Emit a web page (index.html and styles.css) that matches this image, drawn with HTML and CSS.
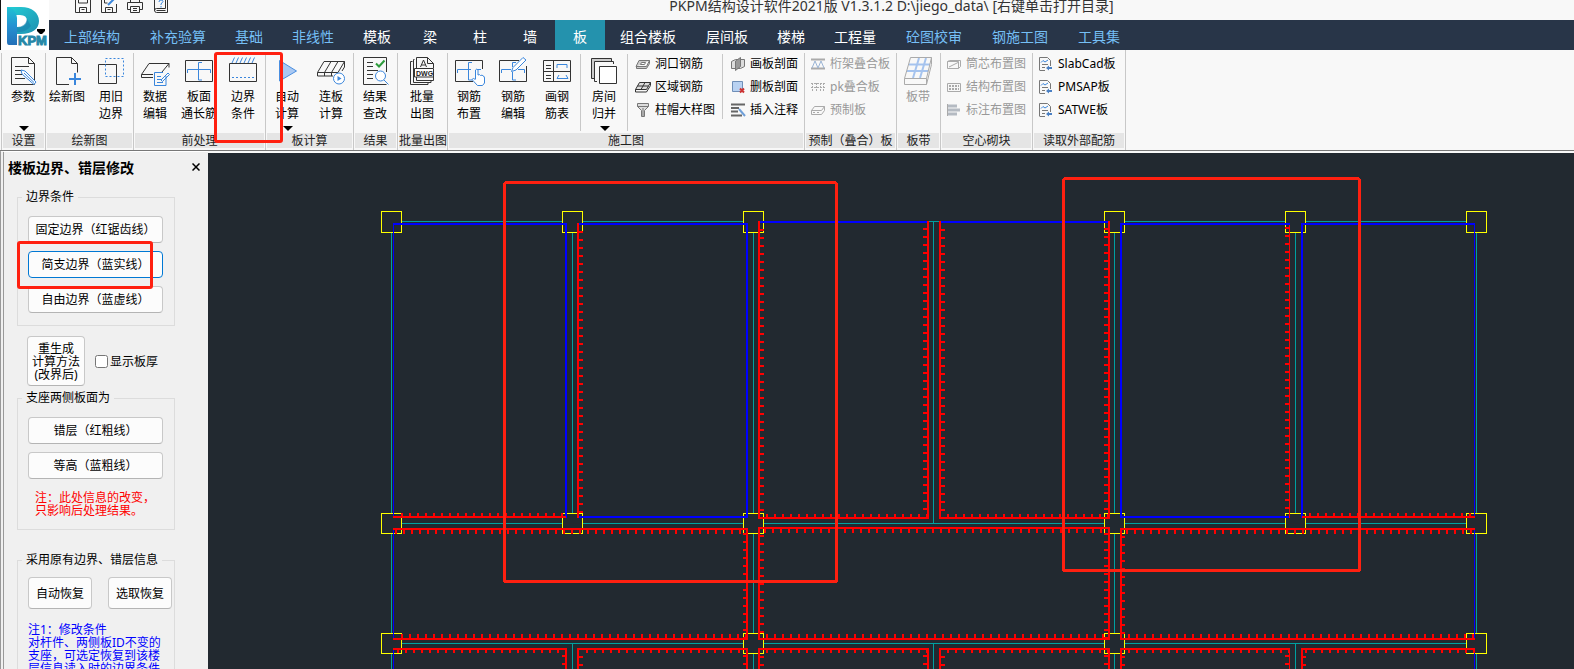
FILE: index.html
```html
<!DOCTYPE html>
<html lang="zh-CN">
<head>
<meta charset="utf-8">
<title>PKPM结构设计软件2021版</title>
<link rel="stylesheet" href="styles.css">
</head>
<body>
<header class="top">
  <button class="logo" aria-label="PKPM">
    <svg width="48" height="48" viewBox="0 0 48 48">
      <defs>
        <linearGradient id="stem" x1="0" y1="0" x2="0" y2="1"><stop offset="0" stop-color="#1fc3d3"/><stop offset=".5" stop-color="#2491d2"/><stop offset="1" stop-color="#2470b8"/></linearGradient>
        <linearGradient id="bowl" x1="0" y1="0" x2="1" y2="1"><stop offset="0" stop-color="#22cfd6"/><stop offset="1" stop-color="#1f8fb0"/></linearGradient>
      </defs>
      <path fill="url(#bowl)" d="M6 5H20C31 5 38 11 38 19S31 32 20 32H16V25Q24 26 26 19Q26 13 19 13H15z"/>
      <path fill="url(#stem)" d="M6 5Q15 6 16 16V43H8Q6 43 6 40z"/>
      <path fill="#1b7fae" d="M16 25Q24 25 26 17L30 24Q24 31 16 30z" opacity=".6"/>
      <text x="17" y="43" class="logo-text">KPM</text>
      <path d="M36 27h8v2l-3 3h-2l-3-3z" fill="#000"/>
    </svg>
  </button>
  <div class="top-main">
    <div class="titlebar">
      <div class="quick">
        <button aria-label="保存"><svg width="16" height="14"><path class="k" d="M.5-2v14.500h15V-2M4.500 12.500v-5h7v5M3.500-1v4h9v-4M6.500 9.500h3"/></svg></button>
        <button aria-label="另存为"><svg width="16" height="14"><path class="k" d="M.5-2v14.500h15V4M4.500 12.500v-5h7v5M3.500-1v4h3M6.500 9.500h3"/><path class="b2" d="M7 5L14-2"/></svg></button>
        <button aria-label="打印"><svg width="16" height="14"><path class="k" d="M3.500 9.500h-3v-7h15v7h-3M3.500 2v-3h9v3M3.500 6.500h9v6h-9zM6 8.500h4M6 10.500h4"/></svg></button>
        <button aria-label="帮助"><svg width="16" height="14"><path class="k" d="M1.500-1v11q0 2.500 2 2.500h11v-15M1.500 10.500q0-2 2-2h9V-1M3.500 10.500h9"/><path class="b" d="M6 2q0-2 2-2t2 1.500L8 4v1M8 6v1.500"/></svg></button>
      </div>
      <h1>PKPM结构设计软件2021版 V1.3.1.2 D:\jiego_data\ [右键单击打开目录]</h1>
    </div>
    <nav class="tabs">
      <a href="#" class="t4 alt">上部结构</a><a href="#" class="t4 alt">补充验算</a><a href="#" class="t2 alt">基础</a><a href="#" class="t3 alt">非线性</a><a href="#" class="t2">模板</a><a href="#" class="t1">梁</a><a href="#" class="t1">柱</a><a href="#" class="t1">墙</a><a href="#" class="t1 on" aria-current="page">板</a><a href="#" class="t4">组合楼板</a><a href="#" class="t3">层间板</a><a href="#" class="t2">楼梯</a><a href="#" class="t3">工程量</a><a href="#" class="t4 alt">砼图校审</a><a href="#" class="t4 alt">钢施工图</a><a href="#" class="t3 alt">工具集</a>
    </nav>
  </div>
</header>

<div class="ribbon">
  <section class="group"><div class="tools">
    <button class="tool"><svg width="44" height="32"><path class="k" d="M10.500 3.500h17l6 6v21h-23zM27.500 3.500v6h6M14 12.500h14M14 16.500h6M14 20.500h7M14 24.500h10"/><path d="M20 16l4 1 11 11-2 2.500L21 20z" fill="#fff" class="b"/><path class="b" d="M23 19l10 9.500"/></svg><span>参数</span><i class="arrow"></i></button>
  </div><h2>设置</h2></section>

  <section class="group"><div class="tools">
    <button class="tool"><svg width="44" height="32"><path class="k" d="M24 30.500H11.500v-27h15l6 6v9M26.500 3.500v6h6"/><path class="b2" d="M24 25h12M30 19v12"/></svg><span>绘新图</span></button>
    <button class="tool"><svg width="44" height="32"><path class="k" d="M9.500 10.500h18v19h-18z"/><path class="b dash" d="M16.500 4.500h18v18h-18z"/></svg><span>用旧<br>边界</span></button>
  </div><h2>绘新图</h2></section>

  <section class="group"><div class="tools">
    <button class="tool"><svg width="44" height="32"><path class="k" d="M20 20.500H8.500L16 9.500h20L29 18M8.500 20.500v3H20M36 9.500v4"/><path class="b" d="M33 22v9.500H21.500v-13H30M24 22.500h4M24 25.500h4M24 28.500h6M28 26l7-7 1.500 1.500-7 7z"/></svg><span>数据<br>编辑</span></button>
    <button class="tool"><svg width="44" height="32"><path class="k" d="M8.500 6.500h27v21h-27z"/><path class="b" d="M10.500 19v-3.500h23V19M25 8.500h-3.500V26H25"/></svg><span>板面<br>通长筋</span></button>
    <button class="tool"><svg width="44" height="32"><path class="k" d="M8.500 9.500h27v18h-27z"/><path class="b" d="M11 9l2.500-5.500M15 9l2.500-5.500M19 9l2.500-5.500M23 9l2.500-5.500M27 9l2.500-5.500M31 9l2.500-5.500"/><path class="b dash" d="M11 23.500h23"/></svg><span>边界<br>条件</span></button>
  </div><h2>前处理</h2></section>

  <section class="group"><div class="tools">
    <button class="tool"><svg width="44" height="32"><path d="M14.500 6.500L31.500 17 14.500 27z" fill="#a9c8f2" stroke="#4a8fe0"/></svg><span>自动<br>计算</span><i class="arrow"></i></button>
    <button class="tool"><svg width="44" height="32"><path class="k" d="M8.500 18.500L15 7.500h20.500L29 18.500zM8.500 18.500v3.500H24M35.500 7.500V13L33 17M15.500 18.500L22 7.500M22.500 18.500L29 7.500M15.500 18.500V22M22.500 18.500V22"/><circle cx="30" cy="24.500" r="5.500" fill="#fff" class="b"/><path d="M28.500 22v5l4-2.500z" fill="#3a86dc"/></svg><span>连板<br>计算</span></button>
  </div><h2>板计算</h2></section>

  <section class="group"><div class="tools">
    <button class="tool"><svg width="44" height="32"><path class="k" d="M33.500 18V3.500h-23v27h23M14 8.500h6M14 12.500h6M14 16.500h11M14 20.500h6M14 24.500h6"/><path d="M23 9.500l3 3 5.500-6" stroke="#2e9c3c" stroke-width="2"/><circle cx="27.500" cy="22" r="5" fill="#fff" class="b"/><path class="b" d="M31 26l4.500 4.500"/></svg><span>结果<br>查改</span></button>
  </div><h2>结果</h2></section>

  <section class="group wide"><div class="tools">
    <button class="tool"><svg width="44" height="32"><path class="k" d="M16.500 14V3.500h11l6 6V14M27.500 3.500v6h6M33.500 23v3.500h-17V23M14.500 5.500h-1v23H31v-2M12.500 7.500h-2v23H28v-2M20.500 13l3-7 3 7M21.500 11h4"/><path class="k" fill="#fff" d="M14.500 14.500h19v8.500h-19z"/><text x="16" y="22" class="dwg">DWG</text></svg><span>批量<br>出图</span></button>
  </div><h2>批量出图</h2></section>

  <section class="group"><div class="tools">
    <button class="tool"><svg width="44" height="32"><path class="k" d="M26 27.500H8.500v-21h27V15"/><path class="b" d="M10.500 19v-3.500H24M31 15.500h3M25 8.500h-3.500V26H25"/><path class="b" fill="#fff" d="M28.500 25v-9q1.500-2 2.500 0v5q2-1 2.500.5 2-1 2.500.5 1.500 0 1.500 2v5l-2 2.500h-5L25 25.500q1-2 3.500 0"/></svg><span>钢筋<br>布置</span></button>
    <button class="tool"><svg width="44" height="32"><path class="k" d="M28 6.500H8.500v21h27V12"/><path class="b" d="M10.500 19v-3.500H20M27 15.500h6.500V19M25 8.500h-3.500V13M21.500 18v8H25"/><path class="b" fill="#fff" d="M20.500 17.500l1.500-4 10-10 3 2.500-10 10z"/></svg><span>钢筋<br>编辑</span></button>
    <button class="tool"><svg width="44" height="32"><path class="k" d="M8.500 6.500h27v21h-27zM18.500 6.500v21M8.500 17.500h27M11 11.500h5M11 14.500h5M11 21.500h5M11 24.500h5"/><path class="b" d="M22 14v-3.500h10V14M24 21l-2 3.500h11L31 21"/></svg><span>画钢<br>筋表</span></button>
    <hr>
    <button class="tool"><svg width="44" height="32"><path d="M9.500 4.500h20v3h-17v17h-3z" fill="#ccc"/><path class="k" d="M12 24.500H9.500v-20h20V7M15 27.500h-2.500v-20h19V10"/><path class="k" fill="#fff" d="M17.500 12.500h17v17h-17z"/></svg><span>房间<br>归并</span><i class="arrow"></i></button>
    <hr>
    <div class="list rooms">
      <button><svg width="16" height="14"><path class="g" fill="#ccc" d="M1 9.500l3-6h10.500l-3 6zM1.500 9.500v2h10l3-5v-3"/><path class="g" fill="#fff" d="M5.500 7.500l1-2h4l-1 2z"/></svg>洞口钢筋</button>
      <button><svg width="16" height="14"><path class="k" fill="#ddd" d="M.5 9.500l4-7h11l-4 7z"/><path class="k" d="M.5 9.500V12h11l4-6.500v-3M2.500 6h11M6 9.500l4-7"/></svg>区域钢筋</button>
      <button><svg width="16" height="14"><path class="g" fill="#ddd" d="M2.500.5h11v3l-4 4v6h-3v-6l-4-4z"/><path class="g" d="M2.500 3.500h11M8 5v8"/></svg>柱帽大样图</button>
    </div>
    <hr class="short">
    <div class="list">
      <button><svg width="16" height="14"><path class="g" fill="#ddd" d="M1.500 4.500l4-2h9v7l-4 2h-9z"/><path class="g" fill="#999" d="M5.500 4l5-3.500v9l-5 4z"/></svg>画板剖面</button>
      <button><svg width="16" height="14"><path d="M2.500 1.500h10v10h-10z" fill="#b9d2f2" stroke="#6f8fb8"/><path d="M10 8.500l4 4M14 8.500l-4 4" stroke="#c33" stroke-width="2"/></svg>删板剖面</button>
      <button><svg width="16" height="14"><path d="M1 1.500h14M1 5h8M1 8.500h7M1 12.500h11" stroke="#666" stroke-width="2"/><path d="M9 6l6 7" stroke="#6f9fd8" stroke-width="2"/></svg>插入注释</button>
    </div>
  </div><h2>施工图</h2></section>

  <section class="group g92"><div class="tools">
    <div class="list">
      <button disabled><svg width="16" height="14"><path class="l" d="M1 2.500h14M1 11.500h14" stroke-width="2"/><path d="M2 11l3-7 3 7 3-7 3 7" stroke="#9ab4d4"/></svg>桁架叠合板</button>
      <button disabled><svg width="16" height="14"><path class="l" d="M1 3.500h14M1 7.500h14M2.500 3v9M6.500 3v9M10.500 3v9M13.500 3v9" stroke-dasharray="2 1"/></svg>pk叠合板</button>
      <button disabled><svg width="16" height="14"><path class="l" d="M1.500 7.500l3-4h10l-3 4zM1.500 7.500v4h10l3-4v-4"/><path class="l dash" d="M3 9.500h8"/></svg>预制板</button>
    </div>
  </div><h2>预制（叠合）板</h2></section>

  <section class="group"><div class="tools">
    <button class="tool" disabled><svg width="44" height="32"><path d="M11 17h21M13 10.500h21M17 24l6-20M24 24l6-20" stroke="#a5c3ee" stroke-width="2"/><path class="l" d="M8.500 24.500l6-21h21l-5 21zM8.500 24.500v6h22v-6M30.500 30.500l5-20v-7"/></svg><span>板带</span></button>
  </div><h2>板带</h2></section>

  <section class="group g92"><div class="tools">
    <div class="list">
      <button disabled><svg width="16" height="14"><path class="l" d="M1.500 4.500h11v7h-11zM1.500 4.500l2-1h11v6l-2 2M3 10l4-2 6-3"/></svg>筒芯布置图</button>
      <button disabled><svg width="16" height="14"><path class="l" d="M1.500 3.500h13v8h-13z"/><path class="l" d="M3 6h10M3 9h10" stroke-width="2" stroke-dasharray="2 1"/></svg>结构布置图</button>
      <button disabled><svg width="16" height="14"><path class="l" d="M1.500 1v12"/><path d="M2 3h9M2 7h12M2 11h9" stroke="#b4bac2" stroke-width="3"/></svg>标注布置图</button>
    </div>
  </div><h2>空心砌块</h2></section>

  <section class="group g93"><div class="tools">
    <div class="list">
      <button><svg width="16" height="14"><path class="g" d="M1.500 13V.5h8l3 3V9M1.500 13.500H7M4 7.500h6M4 10.500h3"/><path class="b" d="M3 5.500l2-2 2 1.500 3-2"/><path d="M8 11l3-2.500V10h3v2h-3v1.500z" fill="#4a80c4"/></svg>SlabCad板</button>
      <button><svg width="16" height="14"><path class="g" d="M1.500 13V.5h8l3 3V9M1.500 13.500H7M4 7.500h6M4 10.500h3"/><path class="b" d="M3 5.500l2-2 2 1.500 3-2"/><path d="M8 11l3-2.500V10h3v2h-3v1.500z" fill="#4a80c4"/></svg>PMSAP板</button>
      <button><svg width="16" height="14"><path class="g" d="M1.500 13V.5h8l3 3V9M1.500 13.500H7M4 7.500h6M4 10.500h3"/><path class="b" d="M3 5.500l2-2 2 1.500 3-2"/><path d="M8 11l3-2.500V10h3v2h-3v1.500z" fill="#4a80c4"/></svg>SATWE板</button>
    </div>
  </div><h2>读取外部配筋</h2></section>
  <div class="mark mark-ribbon"></div>
</div>

<main class="work">
  <aside class="panel">
    <div class="panel-head"><h2>楼板边界、错层修改</h2><button aria-label="关闭"><svg width="8" height="8"><path d="M.5.5l7 7M7.500.5l-7 7" stroke="#000" stroke-width="1.500"/></svg></button></div>
    <fieldset>
      <legend>边界条件</legend>
      <button class="btn">固定边界（红锯齿线）</button>
      <button class="btn focus">简支边界（蓝实线）</button>
      <button class="btn">自由边界（蓝虚线）</button>
    </fieldset>
    <div class="regen">
      <button class="btn">重生成<br>计算方法<br>(改界后)</button>
      <label><input type="checkbox">显示板厚</label>
    </div>
    <fieldset>
      <legend>支座两侧板面为</legend>
      <button class="btn">错层（红粗线）</button>
      <button class="btn">等高（蓝粗线）</button>
      <p class="note red">注：此处信息的改变，<br>只影响后处理结果。</p>
    </fieldset>
    <fieldset class="restore">
      <legend>采用原有边界、错层信息</legend>
      <div class="pair"><button class="btn">自动恢复</button><button class="btn">选取恢复</button></div>
      <p class="note blue">注1：修改条件<br>对杆件、两侧板ID不变的<br>支座，可选定恢复到该楼<br>层信息读入时的边界条件</p>
    </fieldset>
    <div class="mark mark-panel"></div>
  </aside>

  <svg class="canvas" role="img" aria-label="楼板边界平面图"><g transform="translate(-208 -153)">
    <g class="col">
      <path d="M381.500 211.500h20v21h-20zM562.500 211.500h20v21h-20zM743.500 211.500h20v21h-20zM1104.500 211.500h20v21h-20zM1285.500 211.500h20v21h-20zM1466.500 211.500h20v21h-20z"/>
      <path d="M381.500 513.500h20v20h-20zM562.500 513.500h20v20h-20zM743.500 513.500h20v20h-20zM1104.500 513.500h20v20h-20zM1285.500 513.500h20v20h-20zM1466.500 513.500h20v20h-20z"/>
      <path d="M381.500 633.500h20v20h-20zM743.500 633.500h20v20h-20zM1104.500 633.500h20v20h-20zM1466.500 633.500h20v20h-20z"/>
    </g>
    <g class="axis">
      <path d="M402 221.500H562M583 221.500H743M929 221.500h10M1125 221.500h160M1306 221.500h160"/>
      <path d="M402 523.500H562M583 523.500H743M764 523.500h340M1125 523.500h160M1306 523.500h160"/>
      <path d="M402 643.500H743M764 643.500h340M1125 643.500h341"/>
      <path d="M391.500 233V513M572.500 233V513M753.500 233V513M933.500 221V523M1114.500 233V513M1295.500 233V513M1476.500 233V513"/>
      <path d="M391.500 534v99M753.500 534v99M1114.500 534v99M1476.500 534v99"/>
      <path d="M391.500 654v900M572.500 643v900M753.500 654v900M933.500 643v900M1114.500 654v900M1295.500 643v900M1476.500 654v900"/>
    </g>
    <g class="simple">
      <path d="M393 224H566V518M579 224H747V518M579 517H748M760 222H928M940 222h169M1290 224H1121V518M1121 517h168M1474 224H1302V518"/>
      <path class="thin" d="M393.500 223V517M393.500 529V639M393.500 650v900M1474.500 223V517M1474.500 529V639M1474.500 650v900"/>
    </g>
    <g class="fixed">
      <path d="M578 223V518M759 221V518H929M928 221V518M940 221V518M939 518h171M1109 221V518"/>
      <path class="thin" d="M1289.500 225V518M1289.500 649v900"/>
      <path d="M393 517H566M393 529H747V639H393M1110 528H759V639h350V528M1302 517h173M1475 529H1121V639h354"/>
      <path d="M393 649H566v900M578 1549V649H747v900M759 1549V649H928v900M940 1549V649h169v900M1121 1549V649h169M1302 1549V649h173"/>
    </g>
    <g class="teeth">
      <path d="M581 231V513M762 229V513M925 228V513M943 229V513M1106 228V513M1287 227V513"/>
      <path d="M401 514.500H566M395 532H748M766 515.500H929M947 515.500H1108M764 531H1108M1126 532H1475M1309 514.500H1475"/>
      <path d="M745 533V639M762 535V639M1106 533V639M1123 536V639"/>
      <path d="M401 636H748M766 636H1108M1128 636H1475M397 651H566M586 651H748M766 651H929M947 651H1108M1128 651H1290M1305 651H1475"/>
      <path d="M564 655v900M581 656v900M745 655v900M762 656v900M925 655v900M943 656v900M1106 655v900M1123 656v900M1287 655v900M1304 656v900"/>
    </g>
    <g class="marks"><rect x="504.500" y="182.500" width="332" height="399" rx="2"/><rect x="1063.500" y="178.500" width="296" height="392" rx="2"/></g>
  </g></svg>
</main>
</body>
</html>
```
FILE: styles.css
```css
* { box-sizing: border-box; margin: 0; padding: 0; }
html, body { height: 100%; }
body {
  display: flex;
  flex-direction: column;
  overflow: hidden;
  background: #f8f8f8;
  color: #000;
  font: 12px/17px "Noto Sans", "Noto Sans CJK SC", sans-serif;
}
button { font: inherit; color: inherit; background: none; border: 0; white-space: nowrap; }
svg { display: block; flex: none; fill: none; }
h1, h2 { font-weight: 400; }

.k { stroke: #333; }
.g { stroke: #777; }
.l { stroke: #aaa; }
.b, .b2 { stroke: #3a86dc; }
.b2 { stroke-width: 2; }
.dash { stroke-dasharray: 2 2; }

.top { display: flex; height: 50px; flex: none; background: #f8f8f8; }
.logo { width: 49px; flex: none; border-left: 1px solid #111; background: #fff; padding-top: 1px; }
.logo-text { font: bold 13px "Liberation Sans", sans-serif; fill: #2688a8; stroke: #2688a8; stroke-width: 1px; }
.top-main { flex: 1; min-width: 0; }
.titlebar { display: flex; height: 20px; }
.quick { display: flex; gap: 10px; padding-left: 26px; width: 208px; align-items: flex-start; flex: none; }
.titlebar h1 { flex: 1; text-align: center; font-size: 14px; line-height: 12px; color: #333; white-space: nowrap; padding-right: 48px; }
.tabs { display: flex; height: 30px; background: #283548; }
.tabs a { color: #fff; text-decoration: none; text-align: center; font-size: 14px; line-height: 33px; white-space: nowrap; }
.tabs .alt { color: #75bff5; }
.tabs .on { background: #2492ad; }
.t1 { width: 50px; }
.t2 { width: 56px; }
.t3 { width: 72px; }
.t4 { width: 86px; }

.ribbon { display: flex; position: relative; height: 100px; flex: none; padding-left: 1px; background: #f8f8f8; }
.group { display: flex; flex-direction: column; padding-bottom: 2px; background: linear-gradient(#c8c8c8, #c8c8c8) 0 3px / 1px 97px no-repeat; }
.group:last-of-type { border-right: 1px solid #c8c8c8; }
.group h2 { margin: 0 1px 0 2px; background: #e5e5e5; font-size: 12px; line-height: 15px; text-align: center; color: #222; white-space: nowrap; }
.tools { display: flex; flex: 1; justify-content: center; }
.wide { width: 50px; }
.g92 { width: 92px; }
.g93 { width: 94px; }
.g92 .tools, .g93 .tools { justify-content: flex-start; }
.tool { position: relative; display: flex; flex-direction: column; align-items: center; width: 44px; padding-top: 4px; }
.tool svg { margin-bottom: 2px; }
.arrow { position: absolute; left: 18px; bottom: 2px; border: 5px solid transparent; border-top-color: #000; border-bottom: 0; }
button:disabled { color: #999; }
.tools hr { border: 0; width: 1px; margin: 4px 1px 2px 1px; background: #c8c8c8; }
.tools .short { margin-bottom: 14px; }
.list { display: flex; flex-direction: column; padding: 2px 6px 0 6px; }
.list button { display: flex; align-items: center; gap: 4px; height: 23px; line-height: 23px; }
.dwg { font: bold 7px "Liberation Sans", sans-serif; fill: #222; }

.mark { position: absolute; border: 3px solid #ff2010; border-radius: 3px; pointer-events: none; }
.mark-ribbon { left: 214px; top: 2px; width: 69px; height: 91px; }
.mark-panel { left: 13px; top: 89px; width: 136px; height: 48px; }

.work { display: flex; flex: 1; min-height: 0; border-top: 1px solid #777; }
.panel { position: relative; width: 208px; flex: none; border-left: 4px double #999; border-top: 1px solid #fff; background: #f0f0f0; overflow: hidden; }
.panel-head { display: flex; justify-content: space-between; align-items: center; padding: 5px 8px 0 4px; height: 25px; }
.panel-head h2 { font-size: 14px; font-weight: 700; }
fieldset { display: flex; flex-direction: column; gap: 8px; margin: 13px 33px 0 13px; padding: 12px 11px 12px 10px; border: 1px solid #dcdcdc; }
legend { padding: 0 4px; margin-left: -6px; line-height: 14px; white-space: nowrap; }
.btn { height: 27px; line-height: 13px; background: #fcfcfc; border: 1px solid #c8c8c8; border-bottom-color: #b4b4b4; border-radius: 4px; }
.focus { border-color: #0078d4; }
.regen { display: flex; align-items: center; gap: 10px; padding: 10px 0 0 23px; }
.regen .btn { width: 58px; height: 50px; }
.regen label { display: flex; align-items: center; gap: 2px; }
.regen input { width: 13px; height: 13px; }
.regen + fieldset { margin-top: 5px; }
.note { line-height: 13px; white-space: nowrap; }
.red { color: #f00; padding: 4px 0 0 7px; }
.blue { color: #00f; padding-top: 6px; }
fieldset.restore { margin-top: 23px; padding: 10px 2px 0 10px; }
.pair { display: flex; justify-content: space-between; }
.pair .btn { width: 64px; height: 32px; }

.canvas { flex: 1; min-width: 0; height: 100%; margin-top: 2px; background: #222930; shape-rendering: crispEdges; }
.col { stroke: #ff0; }
.axis { stroke: #00a0a0; }
.simple { stroke: #00f; stroke-width: 2; }
.fixed { stroke: #f00; stroke-width: 2; }
.simple .thin, .fixed .thin { stroke-width: 1; }
.teeth { stroke: #f00; stroke-width: 4; stroke-dasharray: 2 6; }
.marks { stroke: #ff2010; stroke-width: 3; }
```
